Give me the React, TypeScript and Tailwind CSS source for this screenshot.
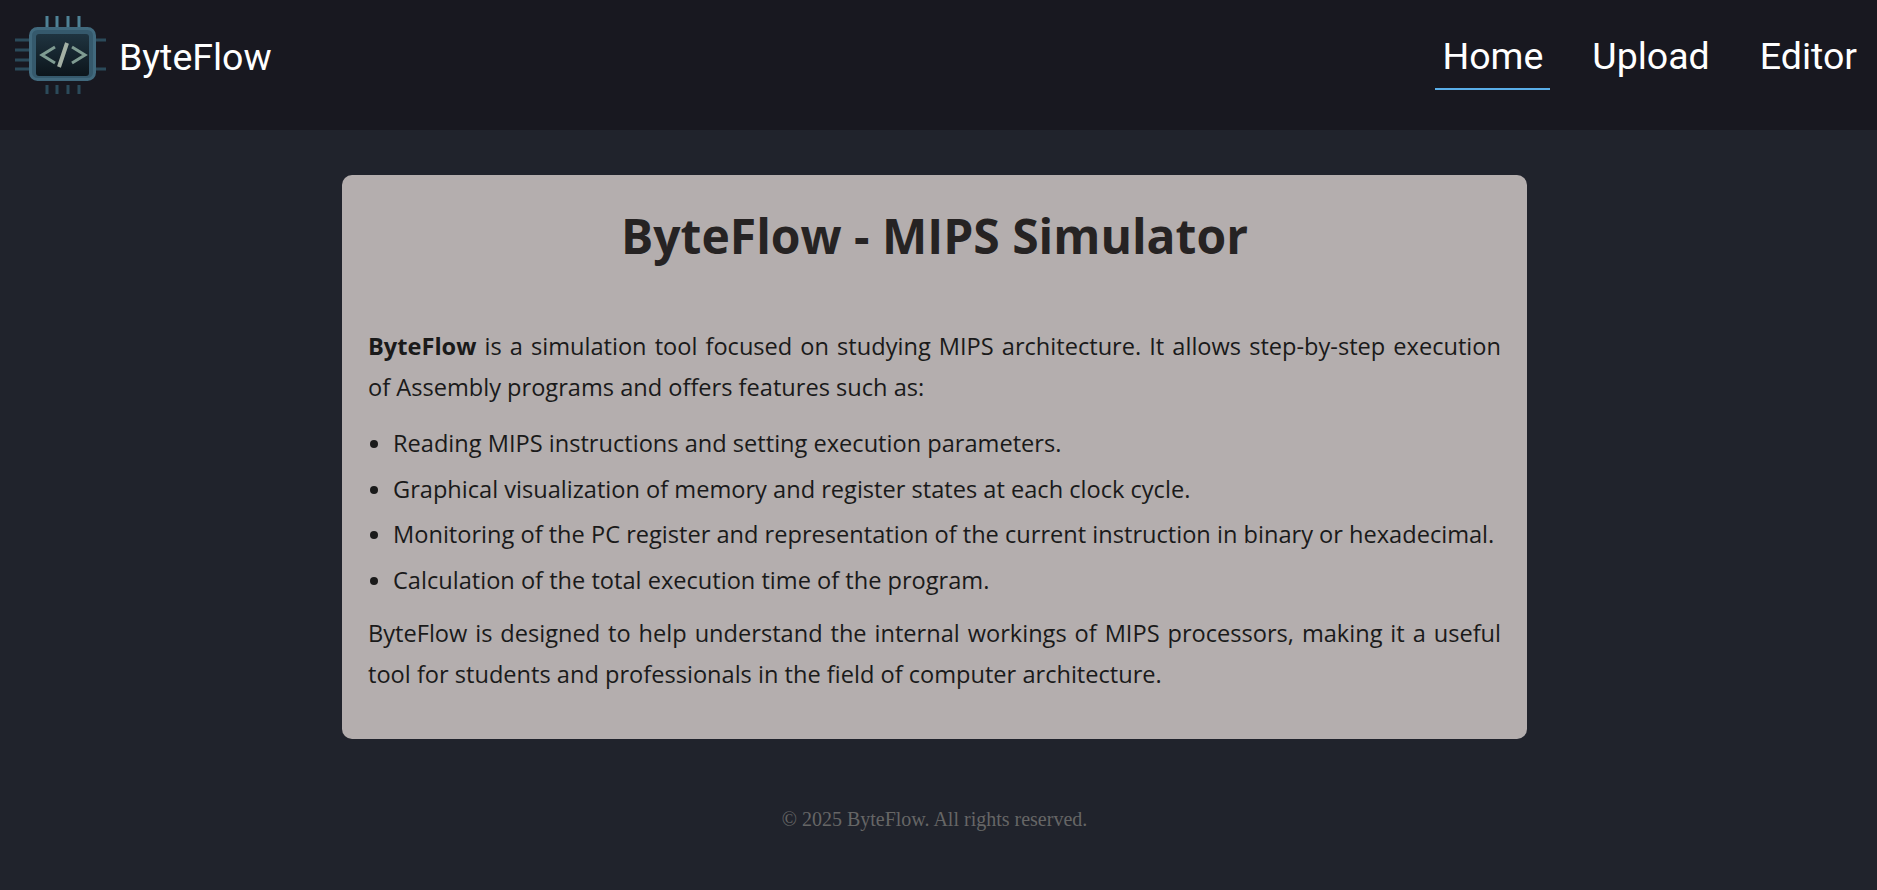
import React from 'react';

function Logo() {
  return (
    <svg width="94" height="84" viewBox="0 0 94 84" className="shrink-0">
      <defs>
        <linearGradient id="chip" x1="0" y1="0" x2="0" y2="1">
          <stop offset="0" stopColor="#1f3440" />
          <stop offset="1" stopColor="#0c151b" />
        </linearGradient>
      </defs>
      {/* pins */}
      <g stroke="#4f8296" strokeWidth="3">
        <path d="M33 0v11M43 0v11M54 0v11M65 0v11" />
      </g>
      <g stroke="#2b4a5a" strokeWidth="3">
        <path d="M33 69v9M43 69v9M54 69v9M65 69v9" />
        <path d="M1 24h14M1 34h14M1 44h14M1 53h14" />
        <path d="M82 24h10M82 53h10" />
      </g>
      <rect x="16.5" y="12.5" width="64" height="51" rx="7" fill="#35596c" stroke="#41697d" strokeWidth="3" />
      <rect x="22" y="18" width="53" height="42" rx="3" fill="url(#chip)" />
      <g fill="none" stroke="#7f9c92" strokeWidth="3">
        <path d="M41 31 L28 39 L41 47" />
        <path d="M58 31 L71 39 L58 47" />
      </g>
      <path d="M53 27 L45 51" stroke="#a3b0a4" strokeWidth="4" />
    </svg>
  );
}

export default function App() {
  return (
    <div className="min-h-[890px] bg-[#20232c] font-['Open_Sans',sans-serif]">
      <header className="h-[130px] bg-[#181820] flex items-center justify-between pl-[14px] pr-[13px] pb-[14px]">
        <div className="flex items-center gap-[11px]">
          <Logo />
          <span className="font-['Roboto',sans-serif] text-[37.5px] text-white mb-[2px]">ByteFlow</span>
        </div>
        <nav className="flex items-center gap-[34px] mt-[2px] font-['Roboto',sans-serif] text-[37.5px] text-white">
          <a className="px-[7px] pb-[3px] border-b-2 border-[#5aaee8]">Home</a>
          <a className="px-[7px] ml-[1px] pb-[3px] border-b-2 border-transparent">Upload</a>
          <a className="px-[7px] ml-[2px] pb-[3px] border-b-2 border-transparent">Editor</a>
        </nav>
      </header>

      <main className="flex flex-col items-center pt-[45px] pr-[8px]">
        <div className="w-[1185px] h-[564px] bg-[#b4aeae] rounded-[10px] px-[26px] pt-[28px] text-[#1a1a1a]">
          <h1 className="text-[48px] font-bold text-center text-[#262323] leading-[66px]">ByteFlow - MIPS Simulator</h1>
          <p className="mt-[57px] text-[23.6px] leading-[41px] text-justify">
            <strong>ByteFlow</strong> is a simulation tool focused on studying MIPS architecture. It allows step-by-step execution of Assembly programs and offers features such as:
          </p>
          <ul className="mt-[13px] list-disc pl-[25px] text-[23.6px] leading-[45.5px]">
            <li>Reading MIPS instructions and setting execution parameters.</li>
            <li>Graphical visualization of memory and register states at each clock cycle.</li>
            <li>Monitoring of the PC register and representation of the current instruction in binary or hexadecimal.</li>
            <li>Calculation of the total execution time of the program.</li>
          </ul>
          <p className="mt-[10px] text-[23.6px] leading-[41px] text-justify">
            ByteFlow is designed to help understand the internal workings of MIPS processors, making it a useful tool for students and professionals in the field of computer architecture.
          </p>
        </div>
      </main>

      <footer className="mt-[65px] pr-[8px] text-center font-['Liberation_Serif',serif] text-[20px] text-[#666666]">
        © 2025 ByteFlow. All rights reserved.
      </footer>
    </div>
  );
}
